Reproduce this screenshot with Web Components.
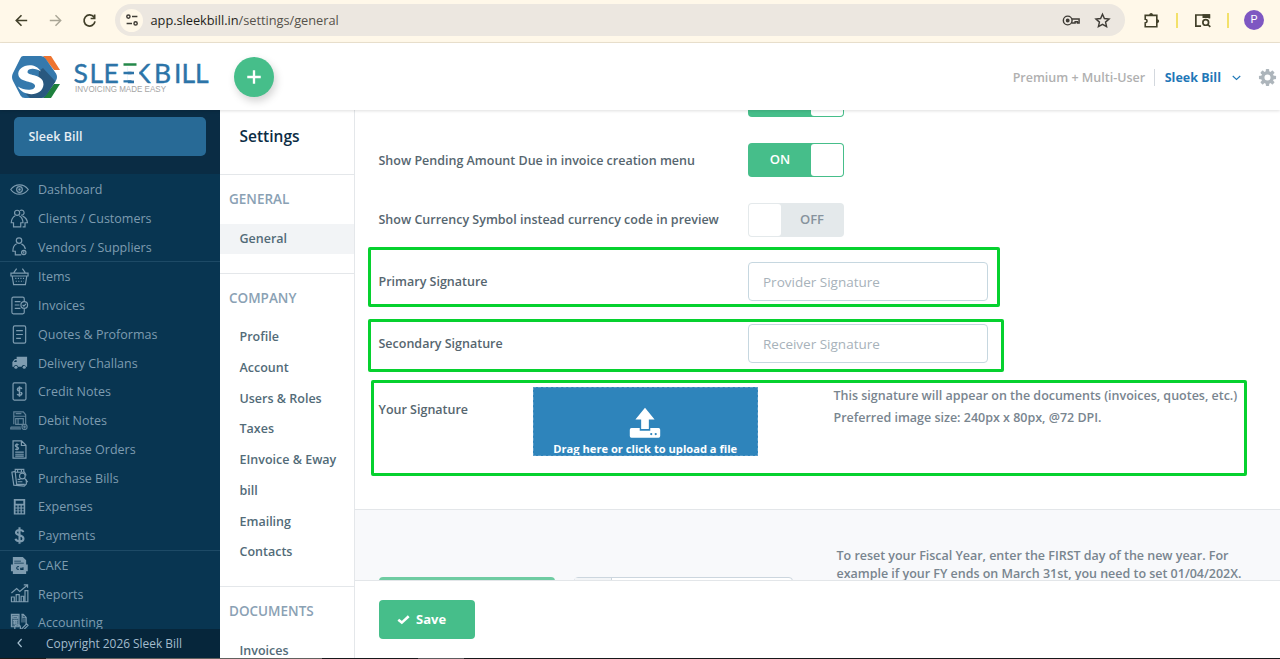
<!DOCTYPE html>
<html lang="en">
<head>
<meta charset="utf-8">
<title>Sleek Bill - Settings</title>
<style>
  html, body { margin: 0; height: 100%; overflow: hidden; }
  body { background: #fff; font-family: "Open Sans", "Noto Sans", sans-serif; font-size: 12.5px; }
</style>
</head>
<body>
<settings-page></settings-page>

<script>
const ICONS = {
  back: '<path d="M16 10H4.5M10 4.5 4.5 10l5.5 5.5"/>',
  forward: '<path d="M4 10h11.5M10 4.5l5.5 5.5-5.5 5.5"/>',
  reload: '<path d="M14.8 6.6A5.8 5.8 0 1 0 15.8 11M15.4 3.8v4.1h-4.2"/>',
  tune: '<circle cx="6" cy="6.2" r="1.8"/><path d="M10 6.2h6M4 13.8h6"/><circle cx="14" cy="13.8" r="1.8"/>',
  key: '<circle cx="6" cy="10" r="4.6"/><circle cx="6" cy="10" r="1.3" fill="currentColor"/><path d="M10.4 8.4h7.6v4.2h-1.8v-1.3h-2.4v1.3h-3.6"/>',
  star: '<path d="m10 3.4 2 4.5 4.9.5-3.7 3.3 1.1 4.8L10 14l-4.3 2.5 1.1-4.8-3.7-3.3 4.9-.5z"/>',
  puzzle: '<path d="M3.4 4.6h12.2v12H3.4v-4.1c2.6-.4 2.6-3.4 0-3.8z"/><path d="M7.6 4.4c0-3 4-3 4 0zM15.8 8.6c3 0 3 4 0 4z" fill="currentColor" stroke="none"/>',
  tabsearch: '<path d="M8.5 16H3V4.2h14.2V8"/><path d="M10 3.4h8v4h-8z" fill="currentColor" stroke="none"/><circle cx="13.4" cy="12" r="3"/><path d="m15.6 14.2 2.6 2.6"/>',
  plus: '<path d="M10 2.5v15M2.5 10h15"/>',
  down: '<path d="m5 8 5 4.5L15 8"/>',
  left: '<path d="m12 5-4.5 5 4.5 5"/>',
  gear: '<g fill="currentColor" stroke="none"><path fill-rule="evenodd" d="M10 3.2a6.8 6.8 0 1 0 0 13.6 6.8 6.8 0 0 0 0-13.6m0 3.6a3.2 3.2 0 1 1 0 6.4 3.2 3.2 0 0 1 0-6.4"/><rect x="8.2" y="1" width="3.6" height="3.6" rx=".8"/><rect x="8.2" y="15.4" width="3.6" height="3.6" rx=".8"/><rect x="1" y="8.2" width="3.6" height="3.6" rx=".8"/><rect x="15.4" y="8.2" width="3.6" height="3.6" rx=".8"/><g transform="rotate(45 10 10)"><rect x="8.2" y="1" width="3.6" height="3.6" rx=".8"/><rect x="8.2" y="15.4" width="3.6" height="3.6" rx=".8"/><rect x="1" y="8.2" width="3.6" height="3.6" rx=".8"/><rect x="15.4" y="8.2" width="3.6" height="3.6" rx=".8"/></g></g>',
  check: '<path d="m2 10.5 5.4 4.3L18 5" stroke-linecap="butt"/>',
  upload: '<path d="M10 .5 16 7.8h-3.6v6H7.6v-6H4z" fill="currentColor" stroke="none"/><path fill="currentColor" stroke="none" fill-rule="evenodd" d="M1.5 13.2h5.2v1.6h6.6v-1.6h5.2q1 0 1 1v4q0 1-1 1h-17q-1 0-1-1v-4q0-1 1-1m12.4 3a.7.7 0 1 0 0 1.4.7.7 0 0 0 0-1.4m2.8 0a.7.7 0 1 0 0 1.4.7.7 0 0 0 0-1.4"/>',
  eye: '<path d="M.8 10C5.5 3.4 14.5 3.4 19.2 10 14.5 16.6 5.5 16.6.8 10z"/><circle cx="10" cy="10" r="3"/><circle cx="10" cy="10" r=".7"/>',
  clients: '<circle cx="7.5" cy="4" r="2.7"/><path d="M10.5 1.7a2.7 2.7 0 1 1 1.2 4.8M5.5 7.2C3 8.5 1.5 11 1.3 14.5h2.4v4.3h7.6v-4.3h2.4c-.2-3.5-1.5-6-4-7.3M13.2 7.5c2.8 1.2 4.9 3.5 5.2 7h-2.6v4.3h-2.5"/>',
  vendor: '<circle cx="9.5" cy="3.8" r="2.9"/><path d="M7 7.2C4.6 8.4 3 11.5 3 15h2.6v3.8h6.2M12 7.2c2.4 1 3.7 2.9 4.2 5.6"/><circle cx="14.5" cy="16.3" r="2.3"/><path d="M14.5 15v2.4"/>',
  basket: '<path d="M1 6.5h18v3H1zM2.3 9.5l1.5 9h12.4l1.5-9M4 6l3-4.2M16 6l-3-4.2"/><path d="M5.5 12h9.5M6 15h8.5" stroke-dasharray="1.2 1.5"/>',
  invoice: '<path d="M15 12.5v4.7q0 1.6-1.6 1.6H3.6Q2 18.8 2 17.2V2.8q0-1.6 1.6-1.6h9.8q1.6 0 1.6 1.6v3.4M5 6h6M5 9.5h5M5 13h6"/><circle cx="15" cy="9.4" r="3.5"/><path d="m13.3 9.4 1.3 1.2 2.2-2.4"/>',
  quote: '<rect x="3.5" y="1" width="13" height="18" rx="1.5"/><path d="M6.5 6h7M6.5 10h7M6.5 14h5"/>',
  truck: '<path d="M7 4h11v10.5h-1.3a2.3 2.3 0 0 0-4.5 0H8.5a2.3 2.3 0 0 0-4.5 0H2.5V9.4L5 6.3h2zM5.6 7.5 4 9.5h3v-2z" fill="currentColor" stroke="none" fill-rule="evenodd"/><circle cx="6.2" cy="15" r="1.7" fill="currentColor" stroke="none"/><circle cx="15" cy="15" r="1.7" fill="currentColor" stroke="none"/>',
  credit: '<rect x="3.2" y="1" width="13.6" height="18" rx="1.3"/><path d="M12.5 7.2C11.6 5.5 7.8 5.7 7.8 8c0 2.3 4.7 1.5 4.7 4 0 2.3-4 2.4-4.9.6M10 4.5v11" stroke-width="1.6"/>',
  debit: '<g opacity=".75"><path d="M4 14V1h10l2.5 3v10.5M4 5.5h12M6 8h8v6H6zM8.5 8v6M.8 17h10.5M.8 17v1.8h10.8M6 2.8h6"/><circle cx="15.3" cy="16.8" r="2.7"/><path d="M15.3 15.3v3M13.8 16.8h3"/></g>',
  order: '<path d="M3.2 1h9l4.6 4.5V19H3.2zM12 1v4.8h4.8M5.5 12.8h9M5.5 15h9M5.5 17h9M9 5.2C8 4 5.6 4.5 5.6 6c0 1.6 3.4 1.2 3.4 2.8 0 1.5-2.5 1.8-3.5.6M7.3 3.5v7"/>',
  bills: '<path d="M5.5 3.5 2 4.5l2 13.5 11 1 2.2-2.2V12M5.5 1.5h9v3h-9zM5.5 4.5l1.5 12.7h8.5M8 1v3M12 1v3M15 4l2 4"/><circle cx="13" cy="8.5" r="3"/><path d="m15.2 10.7 3.5 4.2M8 12h3M8 14.5h5"/>',
  calc: '<path fill="currentColor" stroke="none" fill-rule="evenodd" d="M4 2h12v16.5H4zm2 2v3h8V4zM5.8 9v2h2V9zm3.3 0v2h2V9zm3.3 0v2h2V9zm-6.6 3.1v2h2v-2zm3.3 0v2h2v-2zm3.3 0v2h2v-2zm-6.6 3v2h2v-2zm3.3 0v2h2v-2zm3.3 0v2h2v-2z"/>',
  dollar: '<path d="M14 6.5C13.5 3.5 6.3 3.1 6.3 6.8c0 3.6 7.9 2.5 7.9 6.5 0 3.8-7.5 3.6-8.4.2M10 1.2v17.6" stroke-width="2.2"/>',
  cake: '<path fill="currentColor" stroke="none" fill-rule="evenodd" d="M3 1h10.5L17 4.5V9h1.7v7H17v3H3v-3H1V9h2zM4.5 5v.8h7V5zm0 2v.8h10V7z"/><path d="M9.3 11.3c-2.8-1-3 3.6 0 2.6M13.7 11.8v2.4h-2.4v-1.3h2.4" stroke="#083551" stroke-width="1.1"/>',
  reports: '<path d="M1.5 18.7v-5h3v5M6.5 18.7v-7.5h3.2v7.5M11.7 18.7v-5.8h2.7v5.8M15.8 18.7V7h3v11.7zM1 18.7h18M1.5 9.5 7 4.8l3.3 3 7.5-6.3M14.5 1h4v3"/>',
  accounting: '<path d="M1.5 1.5h8v13h-8zM3 3.5h5v2H3zM3 8h5M3 10.5h5M4.7 7v5M6.5 7v5M12 1.5h2l3 3.2V12M13.5 1.5v3.5H17"/><path d="M1.5 1.5h8v13h-8zM11.5 2h2v4h3v4h-5z" fill="currentColor" stroke="none" opacity=".45"/><circle cx="8" cy="15.5" r="3"/><path d="m12 17 5.5-5.5 1.5 1.5-5.5 5.5h-2z"/>'
};

class AppIcon extends HTMLElement {
  connectedCallback() {
    this.attachShadow({ mode: 'open' });
    const size = this.getAttribute('size') || 20;
    const weight = this.getAttribute('weight') || 1.5;
    this.shadowRoot.innerHTML = `
      <style>
        :host { display: inline-flex; flex: none; width: ${size}px; height: ${size}px; }
        svg { display: block; }
      </style>
      <svg width="${size}" height="${size}" viewBox="0 0 20 20" fill="none" stroke="currentColor" stroke-width="${weight}">${ICONS[this.getAttribute('name')]}</svg>
    `;
  }
}
customElements.define('app-icon', AppIcon);

class BrowserBar extends HTMLElement {
  connectedCallback() {
    this.attachShadow({ mode: 'open' });
    this.shadowRoot.innerHTML = `
      <style>
        :host {
          display: flex;
          align-items: center;
          box-sizing: border-box;
          height: 43px;
          padding: 0 16px 2px 12px;
          border-bottom: 1px solid #ece3d0;
          background: #fff8e9;
          color: #42402a;
        }
        .nav { display: flex; gap: 15px; width: 103px; }
        .nav app-icon:nth-child(2) { color: #a9a595; }
        .address {
          display: flex;
          align-items: center;
          box-sizing: border-box;
          width: 1010px;
          height: 32px;
          padding: 0 13px 0 5px;
          border-radius: 16px;
          background: #ece7e0;
          color: #3f3c36;
        }
        .site {
          display: flex;
          align-items: center;
          justify-content: center;
          width: 23px;
          height: 23px;
          margin-right: 7.5px;
          border-radius: 50%;
          background: #fff8e9;
        }
        .url { flex: 1; font-size: 12.8px; color: #56524b; letter-spacing: -.03px; }
        .url b { font-weight: 400; color: #1f1e1a; }
        .address app-icon + app-icon { margin-left: 12px; }
        .tools { display: flex; flex: 1; align-items: center; justify-content: space-between; padding-left: 17px; }
        i { width: 2px; height: 15px; background: #f3e16b; }
        .avatar {
          width: 20px;
          border-radius: 50%;
          background: #7e57c2;
          color: #fff;
          font: 11px/20px Roboto, sans-serif;
          text-align: center;
        }
      </style>
      <div class="nav">
        <app-icon name="back" size="19" weight="1.7"></app-icon>
        <app-icon name="forward" size="19" weight="1.5"></app-icon>
        <app-icon name="reload" size="19" weight="1.8"></app-icon>
      </div>
      <div class="address">
        <span class="site"><app-icon name="tune" size="18" weight="1.6"></app-icon></span>
        <span class="url"><b>app.sleekbill.in</b>/settings/general</span>
        <app-icon name="key" size="19"></app-icon>
        <app-icon name="star" size="19"></app-icon>
      </div>
      <div class="tools">
        <app-icon name="puzzle" size="19" weight="1.7"></app-icon>
        <i></i>
        <app-icon name="tabsearch" size="19" weight="1.8"></app-icon>
        <i></i>
        <span class="avatar">P</span>
      </div>
    `;
  }
}
customElements.define('browser-bar', BrowserBar);

class SleekLogo extends HTMLElement {
  connectedCallback() {
    this.attachShadow({ mode: 'open' });
    this.shadowRoot.innerHTML = `
      <style>:host { display: block; } svg { display: block; overflow: visible; }</style>
      <svg width="200" height="46" viewBox="0 0 200 46">
        <path d="M33 2h8l9 14h-6z" fill="#ee7430"/>
        <path d="M50 30 41 44h-8l11-14z" fill="#1e813d"/>
        <path d="M13 2h18q3 0 4.5 2.5l10.5 15q2 3.5 0 7l-10.5 15Q34 44 31 44H15q-3 0-4.5-2.5L3 27q-2-4 0-8l7-14Q11 2 13 2z" fill="#3579ad"/>
        <path d="m29 17 4-3 12.5 13.5-9.5 14Q34 44 31 44H20l-4-4 12-8z" fill="#29587f"/>
        <path d="M31 17.5C24 6 6 12 8.5 21.5 10.5 28.5 24 27 25 31.5c1 5-10 6-17 1 4 10 24.5 11 25.5-2 .5-10.5-16-8.5-16-12.5 0-4 8-4.500 13.500-.5z" fill="#fff"/>
        <text x="63.5 79.5 93.5 112 123 138 144 164 171.500 185" y="28.500" font-family="Lato, sans-serif" font-size="26.500" fill="#2c74a8" stroke="#2c74a8" stroke-width=".4">SLEEK BILL</text>
        <!-- the second E has a loose green top bar, the K no stem -->
        <path d="M113 8h4.800v23H113zM124 8h5.200v23H124zM116 8h12v5h-12z" fill="#fff"/>
        <path d="M113.500 19h8M113.500 27.300h8" stroke="#2c74a8" stroke-width="2.300"/>
        <path d="M113.500 10.500h13" stroke="#25884a" stroke-width="2.500"/>
        <text x="65" y="38" font-family="Liberation Sans, sans-serif" font-size="8.300" fill="#a5a5a5" textLength="91" lengthAdjust="spacingAndGlyphs">INVOICING MADE EASY</text>
      </svg>
    `;
  }
}
customElements.define('sleek-logo', SleekLogo);

class AppHeader extends HTMLElement {
  connectedCallback() {
    this.attachShadow({ mode: 'open' });
    this.shadowRoot.innerHTML = `
      <style>
        :host {
          display: flex;
          align-items: center;
          box-sizing: border-box;
          height: 67px;
          padding: 0 3px 0 10px;
          background: #fff;
          box-shadow: 0 1px 3px rgba(0, 0, 0, .13);
          position: relative;
          z-index: 1;
        }
        .add {
          display: flex;
          align-items: center;
          justify-content: center;
          width: 40px;
          height: 40px;
          margin-left: 24px;
          border-radius: 50%;
          background: #46be8a;
          color: #fff;
          box-shadow: 2px 4px 8px rgba(0, 0, 0, .18);
        }
        .right { display: flex; align-items: center; margin-left: auto; padding-top: 1px; }
        .plan {
          padding-right: 9px;
          border-right: 1px solid #d3d8de;
          color: #b0b0b0;
          font-weight: 600;
        }
        .user { margin: 0 8px 0 9.5px; color: #1f78b8; font-weight: 700; }
        .down { color: #1f78b8; }
        .gear { margin-left: 14px; color: #adb5bb; }
      </style>
      <sleek-logo></sleek-logo>
      <span class="add"><app-icon name="plus" size="18" weight="2.6"></app-icon></span>
      <div class="right">
        <span class="plan">Premium + Multi-User</span>
        <span class="user">Sleek Bill</span>
        <app-icon class="down" name="down" size="15" weight="1.5"></app-icon>
        <app-icon class="gear" name="gear" size="19"></app-icon>
      </div>
    `;
  }
}
customElements.define('app-header', AppHeader);

class NavItem extends HTMLElement {
  connectedCallback() {
    this.attachShadow({ mode: 'open' });
    this.shadowRoot.innerHTML = `
      <style>
        :host {
          display: flex;
          flex: none;
          align-items: center;
          gap: 9px;
          height: 28.75px;
          padding-left: 10px;
          color: #7e9cb0;
        }
        :host([divided]) { border-top: 1px solid #1d4a66; }
        span { padding-top: .6px; }
      </style>
      <app-icon name="${this.getAttribute('icon')}" size="19" weight="1.25"></app-icon>
      <span><slot></slot></span>
    `;
  }
}
customElements.define('nav-item', NavItem);

class SideNav extends HTMLElement {
  connectedCallback() {
    this.attachShadow({ mode: 'open' });
    this.shadowRoot.innerHTML = `
      <style>
        :host { display: flex; flex-direction: column; width: 220px; background: #083551; }
        .company { box-sizing: border-box; height: 64px; padding: 7px 14px 0; background: #0a2c44; }
        .company div {
          height: 38.5px;
          padding-left: 14.5px;
          border-radius: 5px;
          background: #286a96;
          color: #e6eef4;
          font-weight: 600;
          line-height: 39.5px;
        }
        nav { display: flex; flex: 1; flex-direction: column; min-height: 0; padding-top: .9px; overflow: hidden; }
        footer {
          display: flex;
          align-items: center;
          box-sizing: border-box;
          height: 29px;
          padding-bottom: 1px;
          background: #06263b;
          color: #a3bccd;
          font-size: 11.9px;
        }
        footer app-icon { margin: 0 18px 0 12px; }
      </style>
      <div class="company"><div>Sleek Bill</div></div>
      <nav>
        <nav-item icon="eye">Dashboard</nav-item>
        <nav-item icon="clients">Clients / Customers</nav-item>
        <nav-item icon="vendor">Vendors / Suppliers</nav-item>
        <nav-item icon="basket" divided>Items</nav-item>
        <nav-item icon="invoice">Invoices</nav-item>
        <nav-item icon="quote">Quotes &amp; Proformas</nav-item>
        <nav-item icon="truck">Delivery Challans</nav-item>
        <nav-item icon="credit">Credit Notes</nav-item>
        <nav-item icon="debit">Debit Notes</nav-item>
        <nav-item icon="order">Purchase Orders</nav-item>
        <nav-item icon="bills">Purchase Bills</nav-item>
        <nav-item icon="calc">Expenses</nav-item>
        <nav-item icon="dollar">Payments</nav-item>
        <nav-item icon="cake" divided>CAKE</nav-item>
        <nav-item icon="reports">Reports</nav-item>
        <nav-item icon="accounting">Accounting</nav-item>
      </nav>
      <footer><app-icon name="left" size="16" weight="1.5"></app-icon>Copyright 2026 Sleek Bill</footer>
    `;
  }
}
customElements.define('side-nav', SideNav);

class SettingsMenu extends HTMLElement {
  connectedCallback() {
    this.attachShadow({ mode: 'open' });
    this.shadowRoot.innerHTML = `
      <style>
        :host {
          display: block;
          box-sizing: border-box;
          width: 134.5px;
          overflow: hidden;
          border-right: 1px solid #e4e7ea;
          background: #fff;
          color: #526b78;
          font-weight: 600;
        }
        h2 { height: 64px; margin: 0; padding-left: 19.5px; color: #0c2d45; font-size: 15.5px; font-weight: 600; line-height: 52px; }
        section { border-top: 1px solid #e4e7ea; padding-bottom: 18.4px; }
        h3 { height: 48.6px; margin: 0; padding-left: 9px; color: #8aa1b4; font-size: 13.5px; font-weight: 600; line-height: 49.5px; }
        a { display: block; padding: 0 5px 0 19.5px; line-height: 30.7px; }
        a.active { background: #f2f4f6; }
      </style>
      <h2>Settings</h2>
      <section>
        <h3>GENERAL</h3>
        <a class="active">General</a>
      </section>
      <section>
        <h3>COMPANY</h3>
        <a>Profile</a><a>Account</a><a>Users &amp; Roles</a><a>Taxes</a><a>EInvoice &amp; Eway bill</a><a>Emailing</a><a>Contacts</a>
      </section>
      <section>
        <h3>DOCUMENTS</h3>
        <a>Invoices</a>
      </section>
    `;
  }
}
customElements.define('settings-menu', SettingsMenu);

class ToggleSwitch extends HTMLElement {
  connectedCallback() {
    this.attachShadow({ mode: 'open' });
    this.shadowRoot.innerHTML = `
      <style>
        :host {
          display: flex;
          flex-direction: row-reverse;
          box-sizing: border-box;
          width: 96px;
          height: 34px;
          padding: 1px;
          border-radius: 4px;
          background: #e4e9eb;
          color: #87939d;
          font-size: 13px;
          font-weight: 600;
          line-height: 31.5px;
          text-align: center;
        }
        :host([on]) { flex-direction: row; background: #46be8a; color: #fff; }
        span { flex: 1; }
        i { width: 32px; border-radius: 3px; background: #fff; }
      </style>
      <span><slot></slot></span><i></i>
    `;
  }
}
customElements.define('toggle-switch', ToggleSwitch);

// One labelled line of the form; "marked" draws the green frame around it.
class FormRow extends HTMLElement {
  connectedCallback() {
    this.attachShadow({ mode: 'open' });
    this.shadowRoot.innerHTML = `
      <style>
        :host {
          display: flex;
          flex: none;
          box-sizing: border-box;
          align-items: center;
          padding-left: 24px;
          color: #56666f;
          font-weight: 600;
        }
        :host([marked]) { border: 3px solid #06d12f; border-radius: 2px; }
        label { flex: none; width: var(--label, 369.5px); }
      </style>
      <label>${this.getAttribute('label') || ''}</label>
      <slot></slot>
    `;
  }
}
customElements.define('form-row', FormRow);

class TextField extends HTMLElement {
  connectedCallback() {
    this.attachShadow({ mode: 'open' });
    this.shadowRoot.innerHTML = `
      <style>
        :host {
          display: block;
          box-sizing: border-box;
          width: 240px;
          height: 38.5px;
          padding-left: 14px;
          border: 1px solid #c6d7e0;
          border-radius: 4px;
          background: #fff;
          color: #a7b2ba;
          font-size: 13.5px;
          font-weight: 400;
          line-height: 38px;
        }
      </style>
      <slot></slot>
    `;
  }
}
customElements.define('text-field', TextField);

class UploadBox extends HTMLElement {
  connectedCallback() {
    this.attachShadow({ mode: 'open' });
    this.shadowRoot.innerHTML = `
      <style>
        :host {
          display: flex;
          flex: none;
          flex-direction: column;
          align-items: center;
          box-sizing: border-box;
          width: 224.5px;
          height: 69px;
          padding-top: 19px;
          overflow: hidden;
          border: 1px dashed #5a9cc9;
          background: #2e84bb;
          color: #fff;
          font-size: 11.15px;
          font-weight: 700;
          line-height: 19px;
        }
      </style>
      <app-icon name="upload" size="32"></app-icon>
      <slot></slot>
    `;
  }
}
customElements.define('upload-box', UploadBox);

class SettingsForm extends HTMLElement {
  connectedCallback() {
    this.attachShadow({ mode: 'open' });
    this.shadowRoot.innerHTML = `
      <style>
        :host { display: flex; flex: 1; flex-direction: column; min-width: 0; }
        .scroll { display: flex; flex: none; flex-direction: column; height: 470px; overflow: hidden; }
        .rows { display: flex; flex: none; flex-direction: column; height: 399px; }
        .cut { margin-top: -27px; }
        .pending { margin-top: 26px; }
        .currency { margin-top: 25.5px; }
        .primary { width: 632px; height: 60px; margin: 10px 0 0 13.5px; padding: 9.5px 0 0 7.5px; }
        .secondary { width: 636px; height: 53px; margin: 12px 0 0 13.5px; padding: 0 0 3.5px 7.5px; }
        .upload { --label: 154.5px; align-items: flex-start; width: 875.5px; height: 96px; margin: 8px 0 0 16.5px; padding: 4px 0 0 4.5px; line-height: 45px; }
        .upload p { margin: -1.5px 0 0 76px; color: #79858f; letter-spacing: -.01px; line-height: 22px; white-space: nowrap; }
        .fiscal { display: flex; flex: 1; box-sizing: border-box; padding-left: 24px; border-top: 1px solid #e3e6e9; background: #f8f9fb; }
        .start { width: 176px; height: 20px; margin-top: 67px; border-radius: 4px; background: #6fcca2; }
        .date { display: flex; box-sizing: border-box; width: 219px; height: 20px; margin: 67px 43.5px 0 19.5px; border: 1px solid #ccd6de; border-radius: 4px; background: #fff; }
        .date i { width: 36px; border-right: 1px solid #ccd6de; background: #f3f5f7; }
        .fiscal p { margin: 37px 0 0; color: #79858f; font-weight: 600; letter-spacing: -.02px; line-height: 17.5px; white-space: nowrap; }
        .actions { display: flex; flex: 1; align-items: flex-start; padding: 19px 24px 0; border-top: 1px solid #e3e6e9; background: #fff; }
        .save {
          display: flex;
          align-items: center;
          box-sizing: border-box;
          width: 96px;
          height: 39px;
          padding: 0 0 1px 18.5px;
          gap: 6px;
          border-radius: 4px;
          background: #46be8a;
          color: #fff;
          font-size: 13px;
          font-weight: 700;
        }
      </style>
      <div class="scroll">
        <div class="rows">
          <form-row class="cut"><toggle-switch on></toggle-switch></form-row>
          <form-row class="pending" label="Show Pending Amount Due in invoice creation menu"><toggle-switch on>ON</toggle-switch></form-row>
          <form-row class="currency" label="Show Currency Symbol instead currency code in preview"><toggle-switch>OFF</toggle-switch></form-row>
          <form-row class="primary" label="Primary Signature" marked><text-field>Provider Signature</text-field></form-row>
          <form-row class="secondary" label="Secondary Signature" marked><text-field>Receiver Signature</text-field></form-row>
          <form-row class="upload" label="Your Signature" marked>
            <upload-box>Drag here or click to upload a file</upload-box>
            <p>This signature will appear on the documents (invoices, quotes, etc.)<br>Preferred image size: 240px x 80px, @72 DPI.</p>
          </form-row>
        </div>
        <div class="fiscal">
          <div class="start"></div>
          <div class="date"><i></i></div>
          <p>To reset your Fiscal Year, enter the FIRST day of the new year. For<br>example if your FY ends on March 31st, you need to set 01/04/202X.</p>
        </div>
      </div>
      <div class="actions"><div class="save"><app-icon name="check" size="13" weight="4"></app-icon>Save</div></div>
    `;
  }
}
customElements.define('settings-form', SettingsForm);

class SettingsPage extends HTMLElement {
  connectedCallback() {
    this.attachShadow({ mode: 'open' });
    this.shadowRoot.innerHTML = `
      <style>
        :host { display: flex; flex-direction: column; height: 659px; }
        main { display: flex; height: 548px; overflow: hidden; }
        .edge { height: 1px; background: linear-gradient(90deg, #1c1a18 46px, #62615f 46px 322px, #17181b 322px 418px, #5d5d5f 418px 464px, #17181b 464px); }
      </style>
      <browser-bar></browser-bar>
      <app-header></app-header>
      <main>
        <side-nav></side-nav>
        <settings-menu></settings-menu>
        <settings-form></settings-form>
      </main>
      <div class="edge"></div>
    `;
  }
}
customElements.define('settings-page', SettingsPage);
</script>
</body>
</html>
